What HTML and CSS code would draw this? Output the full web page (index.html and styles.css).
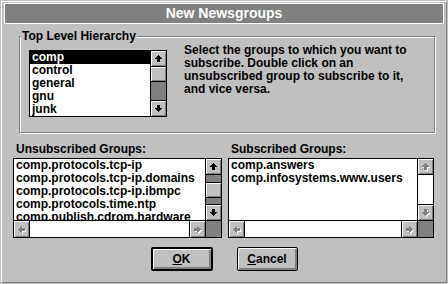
FILE: index.html
```html
<!DOCTYPE html>
<html lang="en">
<head>
  <meta charset="UTF-8">
  <title>New Newsgroups</title>
  <link rel="stylesheet" href="styles.css">
</head>
<body>

  <!-- arrow glyphs, reused by every scroll button -->
  <svg class="defs" width="0" height="0">
    <defs>
      <path id="a-up" d="M7 4h1v1h1v1h1v1h1v1H9v3H6V8H4V7h1V6h1V5h1z"/>
      <path id="a-down" d="M6 4h3v3h2v1h-1v1h-1v1h-1v1H7v-1H6V9H5V8H4V7h2z"/>
      <path id="a-left" d="M4 7V8H5V9H6V10H7V11H8V9H11V6H8V4H7V5H6V6H5V7Z"/>
      <path id="a-right" d="M11 7V8H10V9H9V10H8V11H7V9H4V6H7V4H8V5H9V6H10V7Z"/>
    </defs>
  </svg>

  <div class="window">
    <div class="titlebar">New Newsgroups</div>

    <div class="group">
      <div class="legend">Top Level Hierarchy</div>
      <div class="group-row">
        <div class="listbox listbox-top">
          <div class="list-main">
            <ul class="items">
              <li class="selected">comp</li>
              <li>control</li>
              <li>general</li>
              <li>gnu</li>
              <li>junk</li>
            </ul>
            <div class="vscroll">
              <div class="sb-btn up"><svg class="arrow" viewBox="0 0 15 15"><use href="#a-up"/></svg></div>
              <div class="thumb thumb-top"></div>
              <div class="sb-btn down"><svg class="arrow" viewBox="0 0 15 15"><use href="#a-down"/></svg></div>
            </div>
          </div>
        </div>
        <p class="hint">Select the groups to which you want to<br>subscribe. Double click on an<br>unsubscribed group to subscribe to it,<br>and vice versa.</p>
      </div>
    </div>

    <div class="lists">
      <div class="col col-left">
        <div class="label">Unsubscribed Groups:</div>
        <div class="listbox listbox-big">
          <div class="list-main">
            <ul class="items">
              <li>comp.protocols.tcp-ip</li>
              <li>comp.protocols.tcp-ip.domains</li>
              <li>comp.protocols.tcp-ip.ibmpc</li>
              <li>comp.protocols.time.ntp</li>
              <li>comp.publish.cdrom.hardware</li>
            </ul>
            <div class="vscroll">
              <div class="sb-btn up"><svg class="arrow" viewBox="0 0 15 15"><use href="#a-up"/></svg></div>
              <div class="thumb" style="margin-top: 7px"></div>
              <div class="sb-btn down"><svg class="arrow" viewBox="0 0 15 15"><use href="#a-down"/></svg></div>
            </div>
          </div>
          <div class="hscroll">
            <div class="hbtn left"><svg class="arrow" viewBox="0 0 15 15"><use href="#a-left" x="1" y="1" class="ghost"/><use href="#a-left" class="dim"/></svg></div>
            <div class="htrack"></div>
            <div class="hbtn right"><svg class="arrow" viewBox="0 0 15 15"><use href="#a-right" x="1" y="1" class="ghost"/><use href="#a-right" class="dim"/></svg></div>
            <div class="corner"></div>
          </div>
        </div>
      </div>

      <div class="col col-right">
        <div class="label">Subscribed Groups:</div>
        <div class="listbox listbox-big">
          <div class="list-main">
            <ul class="items">
              <li>comp.answers</li>
              <li>comp.infosystems.www.users</li>
            </ul>
            <div class="vscroll vscroll-off">
              <div class="sb-btn up"><svg class="arrow" viewBox="0 0 15 15"><use href="#a-up" x="1" y="1" class="ghost"/><use href="#a-up" class="dim"/></svg></div>
              <div class="sb-btn down"><svg class="arrow" viewBox="0 0 15 15"><use href="#a-down" x="1" y="1" class="ghost"/><use href="#a-down" class="dim"/></svg></div>
            </div>
          </div>
          <div class="hscroll">
            <div class="hbtn left"><svg class="arrow" viewBox="0 0 15 15"><use href="#a-left" x="1" y="1" class="ghost"/><use href="#a-left" class="dim"/></svg></div>
            <div class="htrack"></div>
            <div class="hbtn right"><svg class="arrow" viewBox="0 0 15 15"><use href="#a-right" x="1" y="1" class="ghost"/><use href="#a-right" class="dim"/></svg></div>
            <div class="corner"></div>
          </div>
        </div>
      </div>
    </div>

    <div class="buttons">
      <button class="btn btn-default"><u>O</u>K</button>
      <button class="btn"><u>C</u>ancel</button>
    </div>
  </div>

</body>
</html>
```

FILE: styles.css
```css
* {
  box-sizing: border-box;
}
body {
  margin: 0;
  background-color: #c0c0c0;
  font: bold 12px/13px "Liberation Sans", Arial, sans-serif;
  color: #000;
}
.defs {
  display: block;
  width: 0;
  height: 0;
}
.window {
  margin: 1px;
  width: 446px;
  height: 282px;
  border-top: 1px solid #fff;
  border-left: 1px solid #fff;
  border-right: 1px solid #808080;
  border-bottom: 1px solid #808080;
  display: flex;
  flex-direction: column;
}
.titlebar {
  margin: 1px 2px 0 2px;
  height: 21px;
  border: 1px solid #fff;
  background-color: #808080;
  color: #fff;
  font-size: 14px;
  line-height: 19px;
  text-align: center;
}

/* group box */
.group {
  margin: 12px 11px 0 17px;
  padding: 0 0 15px 9px;
  border: 1px solid #808080;
  box-shadow: inset 1px 1px #fff, 1px 1px #fff;
}
.legend {
  width: fit-content;
  margin: -7px 0 0 -8px;
  padding: 0 1px;
  background-color: #c0c0c0;
}
.group-row {
  display: flex;
  margin-top: 1px;
}
.hint {
  margin: 0 0 0 17px;
  white-space: nowrap;
}

/* list boxes */
.listbox {
  border: 1px solid #000;
  background-color: #fff;
  display: flex;
  flex-direction: column;
}
.listbox-top {
  margin-top: 6px;
  width: 138px;
  height: 67px;
}
.listbox-big {
  margin-top: 2px;
  height: 80px;
}
.list-main {
  flex: 1;
  min-height: 0;
  display: flex;
}
.items {
  flex: 1;
  margin: 0;
  padding: 0;
  list-style: none;
  overflow: hidden;
}
.items li {
  height: 13px;
  padding-left: 2px;
  white-space: nowrap;
}
.items li.selected {
  background-color: #000;
  color: #fff;
}

/* scroll bars */
.vscroll {
  width: 16px;
  border-left: 1px solid #000;
  background-color: #808080;
  display: flex;
  flex-direction: column;
}
.vscroll-off {
  background-color: #fff;
}
.sb-btn, .thumb, .hbtn {
  background-color: #c0c0c0;
  box-shadow: inset 1px 1px #fff, inset -1px -1px #808080;
}
.sb-btn {
  height: 16px;
}
.sb-btn.up {
  border-bottom: 1px solid #000;
}
.sb-btn.down {
  margin-top: auto;
  border-top: 1px solid #000;
}
.thumb {
  height: 16px;
  border-top: 1px solid #000;
  border-bottom: 1px solid #000;
}
.thumb-top {
  margin-top: -1px;
}
.arrow {
  display: block;
  width: 15px;
  height: 15px;
  shape-rendering: crispEdges;
}
.ghost {
  fill: #fff;
}
.dim {
  fill: #808080;
}
.hscroll {
  height: 17px;
  border-top: 1px solid #000;
  display: flex;
}
.hbtn {
  width: 16px;
  padding-top: 1px;
}
.hbtn.left {
  border-right: 1px solid #000;
}
.hbtn.right {
  border-left: 1px solid #000;
}
.htrack {
  flex: 1;
  background-color: #fff;
}
.corner {
  width: 16px;
  border-left: 1px solid #000;
  background-color: #808080;
}

/* lower lists */
.lists {
  display: flex;
  gap: 6px;
  margin: 10px 11px 0 11px;
}
.col-left {
  width: 209px;
}
.col-right {
  width: 206px;
}
.label {
  padding-left: 3px;
}

/* push buttons */
.buttons {
  display: flex;
  justify-content: center;
  gap: 24px;
  margin-top: 9px;
}
.btn {
  width: 61px;
  height: 24px;
  padding: 0;
  border: 1px solid #000;
  border-radius: 2px;
  background-color: #c0c0c0;
  box-shadow: inset 1px 1px #fff, inset -2px -2px #808080;
  font: inherit;
  color: #000;
}
.btn-default {
  width: 62px;
  border-width: 2px;
}
```
